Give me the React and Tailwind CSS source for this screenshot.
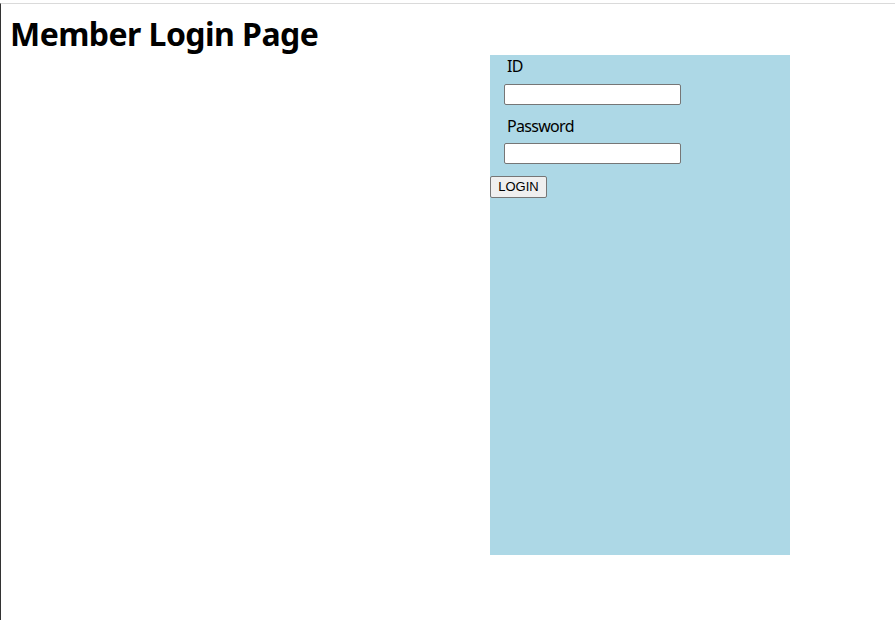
export default function App() {
  return (
    <div className="w-[895px] h-[620px] bg-white pt-[3px] overflow-hidden" style={{ fontFamily: '"Noto Sans", "Noto Sans CJK KR", sans-serif' }}>
      <div className="h-full border-t border-l border-t-[#dadada] border-l-[#333333]">
        <h1 className="h-[51px] pl-[9px] pt-[10px] text-[32px] font-bold leading-[40px] tracking-[-0.55px] text-black">Member Login Page</h1>
        <div className="ml-[489px] w-[300px] h-[500px] bg-[#add8e6] flex flex-col items-start">
          <div className="mt-[1px] pl-[17px] text-[16px] leading-[20px] tracking-[-0.6px] text-black">ID</div>
          <input type="text" className="mt-[8px] ml-[14px] w-[177px] h-[21px] border border-[#767676] rounded-[2px] bg-white" />
          <div className="mt-[11px] pl-[17px] text-[16px] leading-[20px] tracking-[-0.7px] text-black">Password</div>
          <input type="password" className="mt-[7px] ml-[14px] w-[177px] h-[21px] border border-[#767676] rounded-[2px] bg-white" />
          <button className="mt-[12px] w-[57px] h-[22px] border border-[#767676] rounded-[2px] bg-[#efefef] text-[13px] leading-[20px] text-black" style={{ fontFamily: '"Liberation Sans", Arial, sans-serif' }}>LOGIN</button>
        </div>
      </div>
    </div>
  );
}
